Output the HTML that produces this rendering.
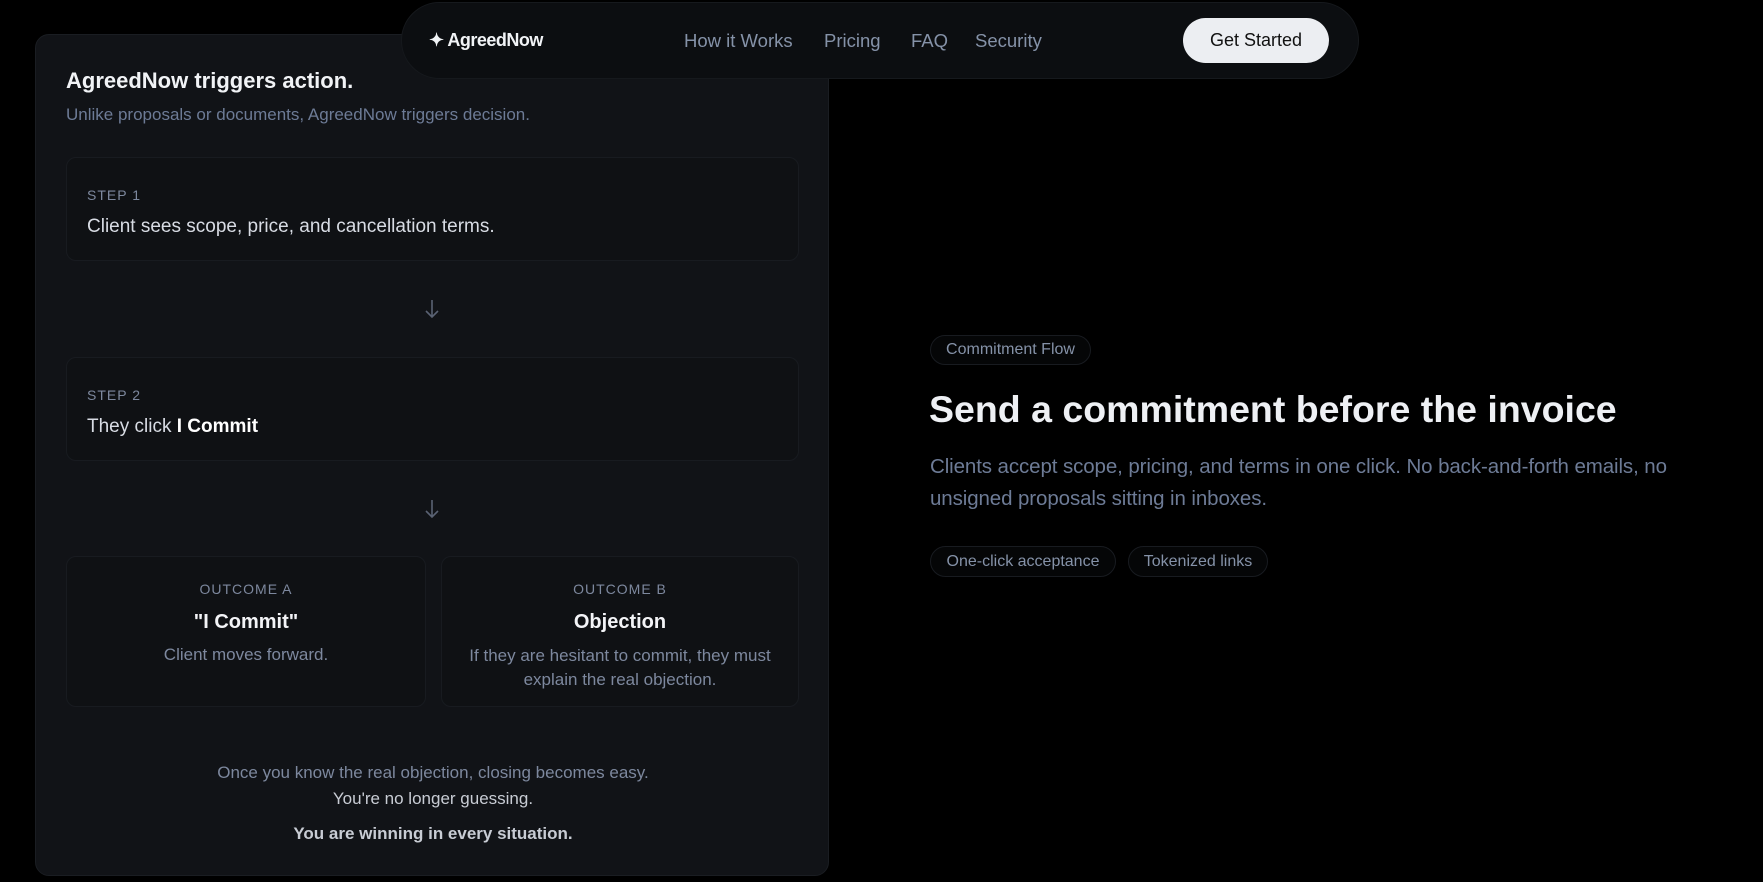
<!DOCTYPE html>
<html><head><meta charset="utf-8"><style>
*{margin:0;padding:0;box-sizing:border-box}
body{width:1763px;height:882px;background:#000;font-family:"Liberation Sans",sans-serif;position:relative;overflow:hidden}
.a{position:absolute}
.card{left:35px;top:34px;width:794px;height:842px;background:#111317;border:1px solid #1a1d22;border-radius:14px}
.box{position:absolute;background:#0f1114;border:1px solid #181b20;border-radius:10px}
.lbl{font-size:14px;letter-spacing:1px;color:#7d889e}
.nav{left:401px;top:2px;width:958px;height:77px;background:#0c0e11;border:1px solid #16191d;border-radius:39px}
.nl{top:30px;font-size:18.5px;color:#8592a8}
.pill{position:absolute;border:1px solid #181b20;border-radius:20px;color:#8592a8;font-size:16px;display:flex;align-items:center;justify-content:center;background:#050607}
.c{text-align:center}
</style></head><body>
<div class="a card">
 <div class="a" style="left:30px;top:33px;font-size:22px;font-weight:bold;color:#f1f3f6">AgreedNow triggers action.</div>
 <div class="a" style="left:30px;top:70px;font-size:17px;color:#6d7b96">Unlike proposals or documents, AgreedNow triggers decision.</div>
 <div class="box" style="left:30px;top:122px;width:733px;height:104px">
  <div class="a lbl" style="left:20px;top:29px">STEP 1</div>
  <div class="a" style="left:20px;top:58px;font-size:19px;color:#d8dce4">Client sees scope, price, and cancellation terms.</div>
 </div>
 <svg class="a" style="left:388px;top:264px" width="16" height="20" viewBox="0 0 16 20"><path d="M8 1V18M2 12L8 18L14 12" stroke="#5a6273" stroke-width="1.6" fill="none"/></svg>
 <div class="box" style="left:30px;top:322px;width:733px;height:104px">
  <div class="a lbl" style="left:20px;top:29px">STEP 2</div>
  <div class="a" style="left:20px;top:58px;font-size:19px;color:#d8dce4">They click <b style="color:#fff">I Commit</b></div>
 </div>
 <svg class="a" style="left:388px;top:464px" width="16" height="20" viewBox="0 0 16 20"><path d="M8 1V18M2 12L8 18L14 12" stroke="#5a6273" stroke-width="1.6" fill="none"/></svg>
 <div class="box c" style="left:30px;top:521px;width:360px;height:151px">
  <div class="lbl" style="margin-top:24px">OUTCOME A</div>
  <div style="margin-top:14px;font-size:20px;font-weight:bold;color:#f3f4f7">"I Commit"</div>
  <div style="margin-top:11px;font-size:17px;color:#7d889e">Client moves forward.</div>
 </div>
 <div class="box c" style="left:405px;top:521px;width:358px;height:151px">
  <div class="lbl" style="margin-top:24px">OUTCOME B</div>
  <div style="margin-top:14px;font-size:20px;font-weight:bold;color:#f3f4f7">Objection</div>
  <div style="margin-top:10px;font-size:17px;color:#7d889e;line-height:24px">If they are hesitant to commit, they must<br>explain the real objection.</div>
 </div>
 <div class="a c" style="left:0;width:794px;top:728px;font-size:17px;color:#7d889e">Once you know the real objection, closing becomes easy.</div>
 <div class="a c" style="left:0;width:794px;top:754px;font-size:17px;color:#c8ccd4">You're no longer guessing.</div>
 <div class="a c" style="left:0;width:794px;top:789px;font-size:17px;font-weight:bold;color:#c8ccd4">You are winning in every situation.</div>
</div>
<div class="a nav"></div>
<div class="a" style="left:429px;top:30px;font-size:18px;font-weight:bold;color:#f1f3f6;letter-spacing:-0.5px">✦ AgreedNow</div>
<div class="a nl" style="left:684px">How it Works</div>
<div class="a nl" style="left:824px">Pricing</div>
<div class="a nl" style="left:911px">FAQ</div>
<div class="a nl" style="left:975px">Security</div>
<div class="a" style="left:1183px;top:18px;width:146px;height:45px;border-radius:23px;background:#eceef2;color:#111;font-size:18px;display:flex;align-items:center;justify-content:center">Get Started</div>
<div class="pill" style="left:930px;top:335px;width:161px;height:30px">Commitment Flow</div>
<div class="a" style="left:929px;top:388px;font-size:37.5px;font-weight:bold;color:#eef0f4">Send a commitment before the invoice</div>
<div class="a" style="left:930px;top:451px;width:800px;font-size:20.5px;line-height:32px;color:#6d7b96;letter-spacing:-0.1px">Clients accept scope, pricing, and terms in one click. No back-and-forth emails, no unsigned proposals sitting in inboxes.</div>
<div class="pill" style="left:930px;top:546px;width:186px;height:31px">One-click acceptance</div>
<div class="pill" style="left:1128px;top:546px;width:140px;height:31px">Tokenized links</div>
</body></html>
